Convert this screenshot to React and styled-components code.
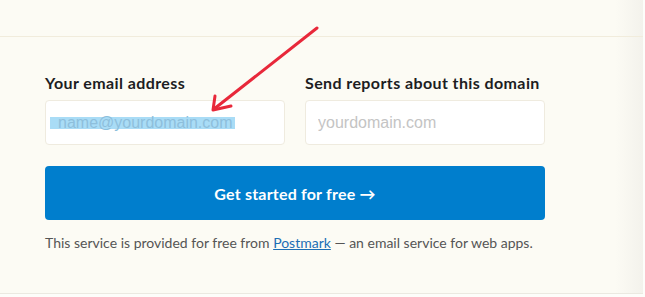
import React from "react";
import styled, { createGlobalStyle } from "styled-components";

const Global = createGlobalStyle`
  html, body {
    margin: 0;
    padding: 0;
    background: #fdfdfa;
  }
  body {
    font-family: Lato, "Noto Sans", sans-serif;
  }
`;

const Page = styled.div`
  position: relative;
  width: 645px;
  height: 297px;
  overflow: hidden;
`;

const Panel = styled.div`
  width: 643px;
  background: linear-gradient(to right, #fcfbf4 0, #fcfbf4 615px, #f3f2ec 643px);
`;

const TopBand = styled.div`
  height: 36px;
  border-bottom: 1px solid #f1ecdc;
`;

const Section = styled.section`
  height: 257px;
  padding: 36px 0 0 45px;
  box-sizing: border-box;
  border-bottom: 1px solid #ebe9e1;
`;

const Fields = styled.div`
  display: grid;
  grid-template-columns: 240px 240px;
  column-gap: 20px;
`;

const Field = styled.div`
  display: flex;
  flex-direction: column;
`;

const Label = styled.label`
  font-weight: 700;
  font-size: 16px;
  color: #1d1d22;
  line-height: 20px;
  margin-bottom: 7px;
  letter-spacing: 0.4px;
`;

const Box = styled.div`
  height: 45px;
  box-sizing: border-box;
  border: 1px solid #efebdf;
  border-radius: 4px;
  background: #ffffff;
  display: flex;
  align-items: center;
  padding-left: ${({ $pad }) => $pad}px;
  font-family: "Liberation Sans", Arial, sans-serif;
  font-size: 16px;
`;

const Selected = styled.span`
  background: #a9dcf6;
  color: #8ebfdc;
  line-height: 12px;
  padding: 0 2px 0 8px;
`;

const Input = styled.input`
  height: 45px;
  box-sizing: border-box;
  border: 1px solid #efebdf;
  border-radius: 4px;
  background: #ffffff;
  padding: 0 0 0 12px;
  font-family: "Liberation Sans", Arial, sans-serif;
  font-size: 16px;
  outline: none;
  &::placeholder {
    color: #c4c4c4;
  }
`;

const Button = styled.button`
  margin-top: 21px;
  width: 500px;
  height: 54px;
  border: 0;
  border-radius: 4px;
  background: #007ecd;
  color: #ffffff;
  font-family: Lato, "Noto Sans", sans-serif;
  font-weight: 700;
  font-size: 16px;
  letter-spacing: 0.2px;
  cursor: pointer;
`;

const Note = styled.p`
  margin: 14px 0 0;
  font-size: 14px;
  color: #555555;
  line-height: 18px;
`;

const NoteLink = styled.a`
  color: #1d6fb5;
  text-decoration: underline;
`;

const Arrow = styled.svg`
  position: absolute;
  left: 0;
  top: 0;
  pointer-events: none;
`;

export default function App() {
  return (
    <>
      <Global />
      <Page>
        <Panel>
          <TopBand />
          <Section>
            <Fields>
              <Field>
                <Label>Your email address</Label>
                <Box $pad={4}>
                  <Selected>name@yourdomain.com</Selected>
                </Box>
              </Field>
              <Field>
                <Label>Send reports about this domain</Label>
                <Input placeholder="yourdomain.com" />
              </Field>
            </Fields>
            <Button>Get started for free →</Button>
            <Note>
              This service is provided for free from <NoteLink href="#">Postmark</NoteLink> — an email service for web apps.
            </Note>
          </Section>
        </Panel>
        <Arrow width="645" height="297" viewBox="0 0 645 297">
          <g stroke="#e8283a" strokeWidth="3" strokeLinecap="round" fill="none">
            <line x1="317" y1="28" x2="214" y2="109" />
            <polyline points="215,96 213,110 231,106" strokeLinejoin="round" />
          </g>
        </Arrow>
      </Page>
    </>
  );
}
